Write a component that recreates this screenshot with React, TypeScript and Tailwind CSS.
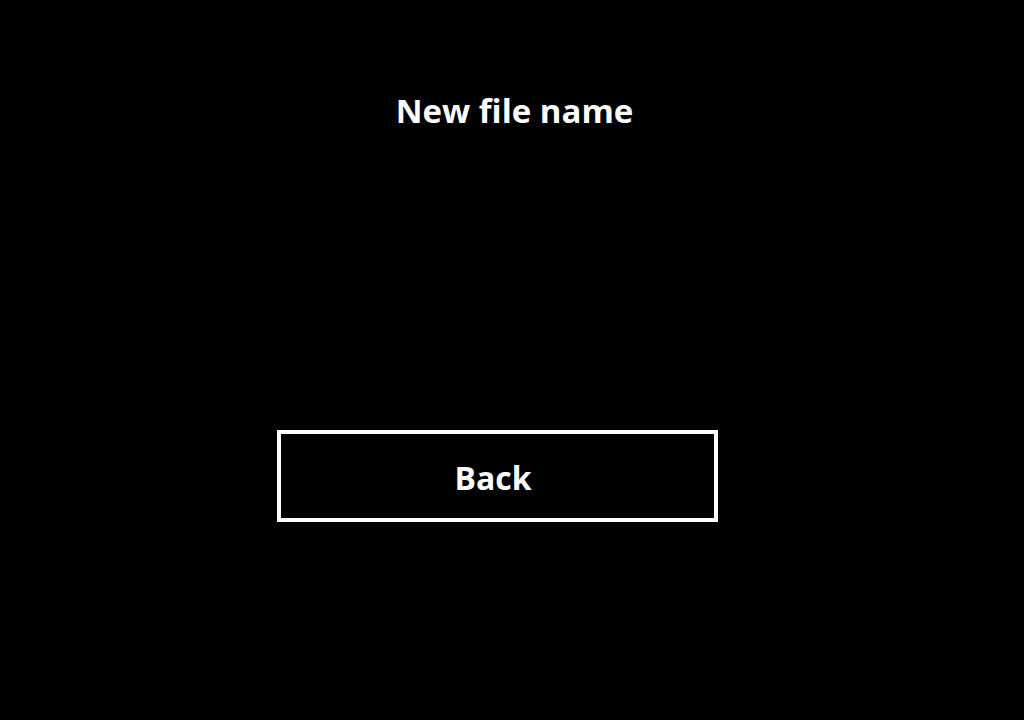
export default function App() {
  return (
    <div
      className="w-[1024px] h-[720px] bg-black text-white flex flex-col"
      style={{ fontFamily: '"Open Sans", "Noto Sans", sans-serif' }}
    >
      {/* Title */}
      <h1 className="pt-[95px] pl-[5px] text-center text-[33px] leading-[32px] font-bold">
        New file name
      </h1>

      {/* Back button */}
      <button className="mt-[303px] ml-[277px] w-[441px] h-[92px] border-4 border-white bg-black flex items-center justify-center pr-[9px] pt-[3px] text-[32px] leading-[32px] font-bold text-white">
        Back
      </button>
    </div>
  );
}
